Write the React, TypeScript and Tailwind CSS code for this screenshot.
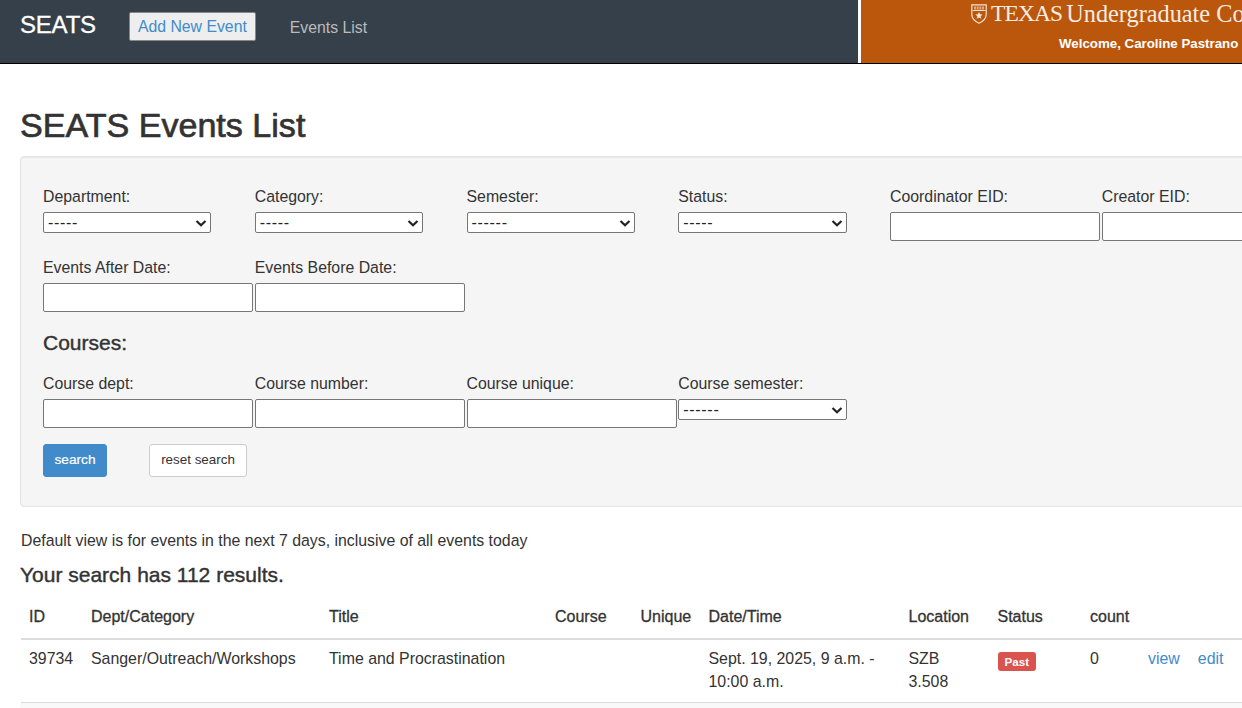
const labelClass = "block text-[15.85px] leading-[21px] text-[#333]";
const textInput = "block h-[29px] w-[210px] rounded-[2px] border border-[#767676] bg-white";

function Select({ value, width = "w-[168.4px]" }: { value: string; width?: string }) {
  return (
    <div className={`mt-[5px] flex h-[21px] items-center justify-between rounded-[2px] border border-[#767676] bg-white pl-[4px] pr-[3px] ${width}`}>
      <span className="text-[16px] leading-none tracking-[0.7px] text-[#222]">{value}</span>
      <svg width="12" height="12" viewBox="0 0 12 12" fill="none" stroke="#222" strokeWidth="2.2">
        <path d="M1.500 4l4.500 4.300L10.500 4" />
      </svg>
    </div>
  );
}

function Field({ label, children }: { label: string; children: React.ReactNode }) {
  return (
    <div className="w-[211.75px] shrink-0">
      <label className={labelClass}>{label}</label>
      {children}
    </div>
  );
}

function Input() {
  return <input className={`${textInput} mt-[5px]`} />;
}

function Shield() {
  return (
    <svg width="16" height="20" viewBox="0 0 16 20" className="mr-[4px] shrink-0">
      <path d="M.8 .8h14.400v9.700c0 4.200-3.200 6.900-7.200 8.700C4 17.400.8 14.700.8 10.500z" fill="none" stroke="#f3e3d3" strokeWidth="1.200" />
      <path d="M1.500 6.500h13" stroke="#f3e3d3" strokeWidth="1" />
      <path d="M3 2.500h10v3H3z" fill="#f3e3d3" opacity="0.6" />
      <path d="M5.500 2.500v3M8 2.500v3M10.500 2.500v3" stroke="#bb570c" strokeWidth="0.7" />
      <path d="M8 8l1.100 2.300 2.500.2-1.900 1.700.6 2.500L8 13.400l-2.300 1.300.6-2.500-1.900-1.700 2.500-.2z" fill="#f3e3d3" />
    </svg>
  );
}

const columns = [
  { name: "ID", w: "w-[62px]" },
  { name: "Dept/Category", w: "w-[238px]" },
  { name: "Title", w: "w-[226px]" },
  { name: "Course", w: "w-[85.5px]" },
  { name: "Unique", w: "w-[68px]" },
  { name: "Date/Time", w: "w-[200px]" },
  { name: "Location", w: "w-[89px]" },
  { name: "Status", w: "w-[92.5px]" },
  { name: "count", w: "w-[58px]" },
  { name: "", w: "w-[120px]" },
];

const cell = "px-[8px] pb-[9px] pt-[7px]";

export default function App() {
  return (
    <div className="h-[708px] w-[1242px] overflow-hidden bg-white font-['Liberation_Sans',Arial,sans-serif] text-[15.9px] leading-[23px] text-[#333]">
      <header className="flex h-[64px] w-[1400px] border-b border-black">
        <nav className="flex w-[858px] items-start bg-[#36404a]">
          <a className="ml-[20px] mt-[11px] text-[24px] leading-[28px] tracking-[-0.2px] text-white [-webkit-text-stroke:0.3px_white]">SEATS</a>
          <a className="ml-[33px] mt-[12px] flex h-[29px] items-center rounded-[2px] border border-[#888] bg-[#eee] px-[8px] text-[15.8px] text-[#428bca]">
            Add New Event
          </a>
          <a className="ml-[34px] mt-[16px] text-[15.8px] leading-[23px] text-[#bbb]">Events List</a>
        </nav>
        <div className="ml-[3px] w-[538px] bg-[#bb570c]">
          <div className="ml-[110px] mt-[3px] flex h-[22px] items-center whitespace-nowrap font-['Liberation_Serif',serif] text-[23.5px] leading-none text-[#f7ece2]">
            <Shield />
            <span className="tracking-[-0.9px]">TEXAS</span>
            <span className="ml-[4px] text-[24.3px]">Undergraduate College</span>
          </div>
          <div className="ml-[198px] mt-[10px] text-[13.3px] font-bold leading-[18px] text-white">
            Welcome, Caroline Pastrano
          </div>
        </div>
      </header>

      <main className="w-[1400px] pl-[20px]">
        <h1 className="mt-[40px] text-[34.1px] font-normal leading-[42px] text-[#333] [-webkit-text-stroke:0.7px_#333]">SEATS Events List</h1>

        <section className="mt-[10px] h-[351px] w-[1300px] rounded-[4px] border border-[#e3e3e3] bg-[#f5f5f5] pl-[22px] pt-[29px] shadow-[inset_0_1px_1px_rgba(0,0,0,0.05)]">
          <div className="flex">
            <Field label="Department:"><Select value="-----" /></Field>
            <Field label="Category:"><Select value="-----" /></Field>
            <Field label="Semester:"><Select value="------" /></Field>
            <Field label="Status:"><Select value="-----" /></Field>
            <Field label="Coordinator EID:"><Input /></Field>
            <Field label="Creator EID:"><Input /></Field>
          </div>
          <div className="mt-[16px] flex">
            <Field label="Events After Date:"><Input /></Field>
            <Field label="Events Before Date:"><Input /></Field>
          </div>
          <h3 className="mt-[19px] text-[21px] font-normal leading-[24px] text-[#333] [-webkit-text-stroke:0.4px_#333]">Courses:</h3>
          <div className="mt-[18px] flex">
            <Field label="Course dept:"><Input /></Field>
            <Field label="Course number:"><Input /></Field>
            <Field label="Course unique:"><Input /></Field>
            <Field label="Course semester:"><Select value="------" /></Field>
          </div>
          <div className="mt-[16px] flex items-center">
            <button className="h-[33px] w-[64px] rounded-[3px] border border-[#428bca] bg-[#428bca] pb-[2px] text-[13.7px] leading-none text-white [-webkit-text-stroke:0.2px_white]">search</button>
            <button className="ml-[42px] h-[33px] w-[98px] rounded-[3px] border border-[#ccc] bg-white pb-[2px] text-[13.4px] leading-none text-[#333]">reset search</button>
          </div>
        </section>

        <p className="ml-[1px] mt-[22px] text-[15.85px] leading-[23px]">Default view is for events in the next 7 days, inclusive of all events today</p>
        <h4 className="mt-[11px] text-[21px] font-normal leading-[24px] text-[#333] [-webkit-text-stroke:0.4px_#333]">Your search has 112 results.</h4>

        <table className="ml-[1px] mt-[9px] table-fixed border-collapse text-left">
          <thead>
            <tr className="border-b-2 border-[#ddd]">
              {columns.map((c) => (
                <th key={c.name} className={`${c.w} px-[8px] pb-[10px] pt-[9px] text-[16px] font-normal leading-[23px] [-webkit-text-stroke:0.3px_#333]`}>{c.name}</th>
              ))}
            </tr>
          </thead>
          <tbody>
            <tr className="border-b border-[#ddd] align-top">
              <td className={cell}>39734</td>
              <td className={cell}>Sanger/Outreach/Workshops</td>
              <td className={cell}>Time and Procrastination</td>
              <td />
              <td />
              <td className={cell}>Sept. 19, 2025, 9 a.m. - 10:00 a.m.</td>
              <td className={cell}>SZB<br />3.508</td>
              <td className={cell}>
                <span className="mt-[5px] inline-block h-[19px] rounded-[3px] bg-[#d9534f] px-[7px] text-[11.6px] font-bold leading-[19px] text-white">Past</span>
              </td>
              <td className={cell}>0</td>
              <td className={`${cell} whitespace-nowrap text-[#428bca]`}>
                <a>view</a>
                <a className="ml-[18px]">edit</a>
              </td>
            </tr>
          </tbody>
        </table>
        <div className="h-[6px] bg-[#f9f9f9]" />
      </main>
    </div>
  );
}
